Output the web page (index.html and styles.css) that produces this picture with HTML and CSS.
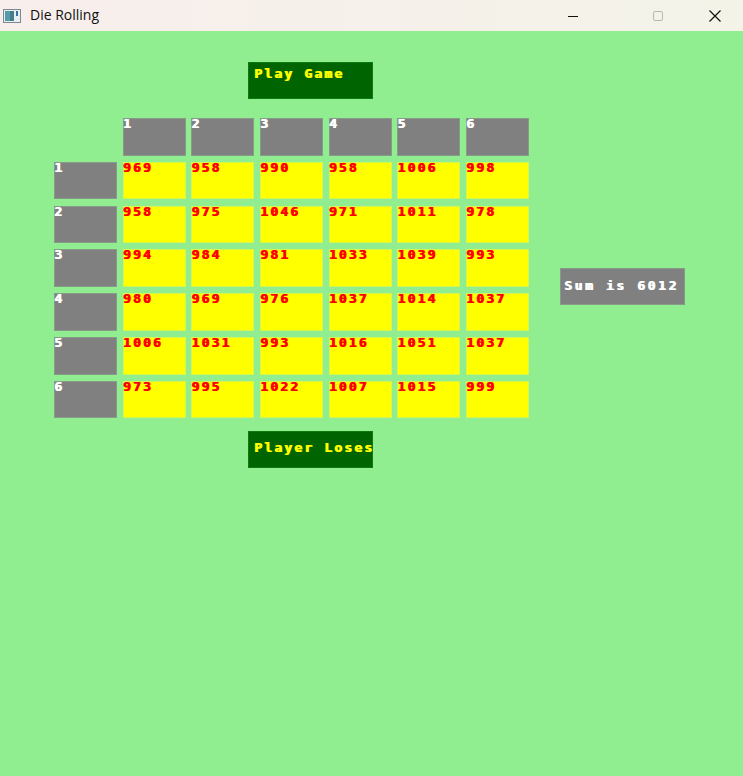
FILE: index.html
```html
<!DOCTYPE html>
<html>
<head>
<meta charset="utf-8">
<title>Die Rolling</title>
<link rel="stylesheet" href="styles.css">
</head>
<body>
<div class="window">
  <div class="titlebar">
    <div class="app">
      <svg class="app-icon" width="18" height="14" viewBox="0 0 18 14">
        <rect x="0.5" y="0.5" width="17" height="13" fill="#e8eef2" stroke="#7a8a94"/>
        <rect x="2" y="2" width="9" height="10" fill="#3f7f8f"/>
        <rect x="2" y="2" width="5" height="10" fill="#5a9aa8"/>
        <rect x="13" y="2" width="2" height="5" fill="#3f6f9f"/>
      </svg>
      <span class="title">Die Rolling</span>
    </div>
    <div class="controls">
      <span class="ctl"><svg width="12" height="12" viewBox="0 0 12 12"><path d="M1 6.5H11" stroke="#111" stroke-width="1"/></svg></span>
      <span class="ctl"><svg width="12" height="12" viewBox="0 0 12 12"><rect x="1.5" y="1.5" width="9" height="9" rx="1.5" fill="none" stroke="#b8b8b0" stroke-width="1"/></svg></span>
      <span class="ctl"><svg width="14" height="14" viewBox="0 0 14 14"><path d="M1.5 1.5L12.5 12.5M12.5 1.5L1.5 12.5" stroke="#111" stroke-width="1.2"/></svg></span>
    </div>
  </div>
  <div class="content">
    <div class="btn play">Play Game</div>
    <div class="middle">
      <div class="grid">
        <div class="blank"></div>
        <div class="cell head">1</div><div class="cell head">2</div><div class="cell head">3</div><div class="cell head">4</div><div class="cell head">5</div><div class="cell head">6</div>

        <div class="cell head">1</div>
        <div class="cell val">969</div><div class="cell val">958</div><div class="cell val">990</div><div class="cell val">958</div><div class="cell val">1006</div><div class="cell val">998</div>

        <div class="cell head">2</div>
        <div class="cell val">958</div><div class="cell val">975</div><div class="cell val">1046</div><div class="cell val">971</div><div class="cell val">1011</div><div class="cell val">978</div>

        <div class="cell head">3</div>
        <div class="cell val">994</div><div class="cell val">984</div><div class="cell val">981</div><div class="cell val">1033</div><div class="cell val">1039</div><div class="cell val">993</div>

        <div class="cell head">4</div>
        <div class="cell val">980</div><div class="cell val">969</div><div class="cell val">976</div><div class="cell val">1037</div><div class="cell val">1014</div><div class="cell val">1037</div>

        <div class="cell head">5</div>
        <div class="cell val">1006</div><div class="cell val">1031</div><div class="cell val">993</div><div class="cell val">1016</div><div class="cell val">1051</div><div class="cell val">1037</div>

        <div class="cell head">6</div>
        <div class="cell val">973</div><div class="cell val">995</div><div class="cell val">1022</div><div class="cell val">1007</div><div class="cell val">1015</div><div class="cell val">999</div>
      </div>
      <div class="sum">Sum is 6012</div>
    </div>
    <div class="btn loses">Player Loses</div>
  </div>
</div>
</body>
</html>
```

FILE: styles.css
```css
html, body {
  margin: 0;
  padding: 0;
}
body {
  width: 743px;
  height: 776px;
  overflow: hidden;
  background: #90ee90;
}
.window {
  display: flex;
  flex-direction: column;
  height: 776px;
}
.titlebar {
  height: 31px;
  flex: none;
  display: flex;
  align-items: center;
  justify-content: space-between;
  background: linear-gradient(to right, #f8eeec, #f3f3e8);
}
.app {
  display: flex;
  align-items: center;
  padding-left: 3px;
}
.app-icon {
  display: block;
}
.title {
  margin-left: 9px;
  font-family: "Open Sans", "Noto Sans", sans-serif;
  font-size: 14px;
  color: #111;
  position: relative;
  top: -1px;
}
.controls {
  display: flex;
  height: 31px;
}
.ctl {
  width: 57px;
  display: flex;
  align-items: center;
  justify-content: center;
}
.ctl svg {
  display: block;
}
.ctl:first-child {
  width: 62px;
  justify-content: flex-start;
  padding-left: 1px;
}
.content {
  flex: 1;
  display: flex;
  flex-direction: column;
  align-items: flex-start;
  font-family: "DejaVu Sans Mono", "Liberation Mono", monospace;
  font-weight: bold;
  font-size: 13px;
  letter-spacing: 2.17px;
  line-height: 10px;
}
.btn {
  box-sizing: border-box;
  width: 125px;
  height: 37px;
  background: #006400;
  box-shadow: inset 0 0 0 1px #0c7a0c;
  color: #ffff00;
  text-shadow: 1px 0 0 #ffff00;
  padding: 7px 0 0 6px;
  white-space: nowrap;
  overflow: hidden;
}
.play {
  margin: 31px 0 0 248px;
}
.loses {
  margin: 13px 0 0 248px;
  padding-top: 12px;
}
.middle {
  display: flex;
  align-items: flex-start;
  margin: 19px 0 0 54px;
}
.grid {
  display: grid;
  grid-template-columns: repeat(7, 63px);
  grid-auto-rows: 37.5px;
  column-gap: 5.67px;
  row-gap: 6.33px;
}
.cell {
  box-sizing: border-box;
  padding: 1px 0 0 0;
  white-space: nowrap;
}
.head {
  background: #808080;
  box-shadow: inset 0 0 0 1px #889a88;
  color: #ffffff;
  text-shadow: 1px 0 0 #ffffff;
}
.val {
  background: #ffff00;
  box-shadow: inset 0 0 0 1px #d4f650;
  color: #ff0000;
  text-shadow: 1px 0 0 #ff0000;
}
.sum {
  box-sizing: border-box;
  width: 125px;
  height: 37px;
  margin: 150px 0 0 31px;
  background: #808080;
  box-shadow: inset 0 0 0 1px #889a88;
  color: #ffffff;
  text-shadow: 1px 0 0 #ffffff;
  padding: 13px 0 0 4px;
  letter-spacing: 2.6px;
  white-space: nowrap;
}
```
